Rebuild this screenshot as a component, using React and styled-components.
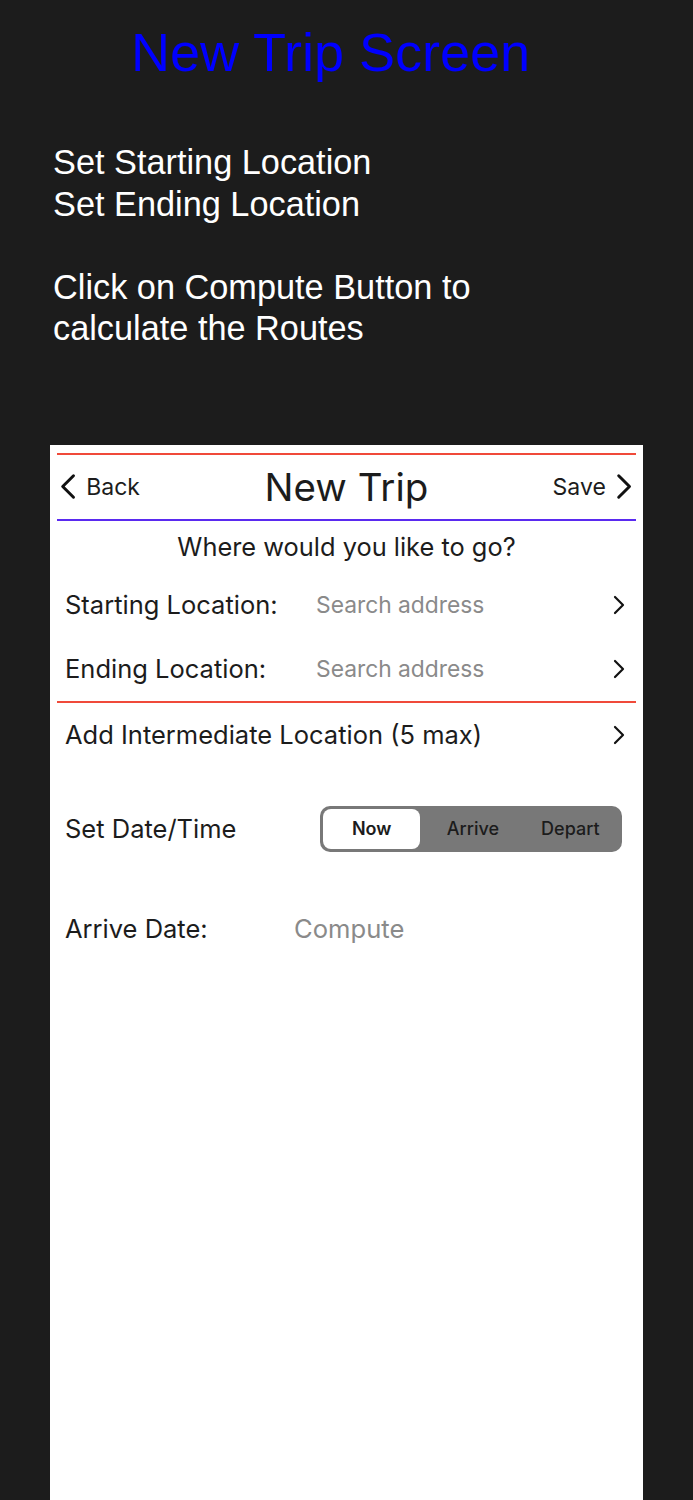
import React from 'react'
import styled, { createGlobalStyle } from 'styled-components'

const GlobalStyle = createGlobalStyle`
    body {
        margin: 0;
        background-color: #1c1c1c;
        font-family: "Liberation Sans", Arial, sans-serif;
    }
`;

const Page = styled.div`
    width: 693px;
    min-height: 1500px;
    background-color: #1c1c1c;
    padding-top: 22px;
    box-sizing: border-box;
`;

const Title = styled.h1`
    margin: 0 0 0 131px;
    font-family: "Liberation Sans", Arial, sans-serif;
    font-weight: 400;
    font-size: 54px;
    line-height: 60px;
    color: #0000ff;
`;

const Notes = styled.div`
    margin: 60px 0 0 53px;
    font-size: 34.3px;
    line-height: 41.5px;
    color: #ffffff;
`;

const Card = styled.div`
    width: 593px;
    height: 1056px;
    margin: 95px 0 0 50px;
    padding: 8px 7px 0 7px;
    box-sizing: border-box;
    background-color: #ffffff;
    font-family: Inter, "Noto Sans", sans-serif;
    color: #1c1c1c;
`;

const Rule = styled.div`
    height: 2px;
    background-color: ${props => props.$color};
`;

const Header = styled.div`
    height: 64px;
    display: grid;
    grid-template-columns: 1fr auto 1fr;
    align-items: center;

    h2 {
        margin: 0;
        font-size: 38.5px;
        font-weight: 400;
    }
`;

const NavButton = styled.div`
    display: flex;
    align-items: center;
    gap: 10px;
    font-size: 23px;
    justify-content: ${props => props.$right ? 'flex-end' : 'flex-start'};
    padding: ${props => props.$right ? '0 4px 0 0' : '0 0 0 3px'};
`;

const Question = styled.div`
    height: 52px;
    display: flex;
    align-items: center;
    justify-content: center;
    font-size: 25.4px;
`;

const Row = styled.div`
    height: 64px;
    display: flex;
    align-items: center;
    padding: 0 11px 0 8px;
    font-size: 25.5px;
`;

const Label = styled.span`
    width: ${props => props.$width || 'auto'};
    flex-shrink: 0;
`;

const Value = styled.span`
    flex: 1;
    color: #8a8a8a;
    font-size: ${props => props.$size || '22.8px'};
`;

const OptionRow = styled.div`
    height: 46px;
    display: flex;
    align-items: center;
    padding: 0 14px 0 8px;
    margin-top: ${props => props.$gap};
    font-size: 25.5px;
`;

const Segmented = styled.div`
    margin-left: auto;
    width: 302px;
    height: 46px;
    box-sizing: border-box;
    padding: 3px;
    display: flex;
    border-radius: 10px;
    background-color: #787878;
`;

const Segment = styled.div`
    flex: 1;
    display: flex;
    align-items: center;
    justify-content: center;
    border-radius: 8px;
    font-size: 18px;
    font-weight: ${props => props.$active ? 600 : 500};
    background-color: ${props => props.$active ? '#ffffff' : 'transparent'};
    margin-right: ${props => props.$active ? '4px' : '0'};
    color: #1c1c1c;
`;

const Chevron = ({ left, size = 20 }) => (
    <svg width={size * 0.6} height={size} viewBox="0 0 12 20" fill="none">
        <polyline
            points={left ? '10,2 2,10 10,18' : '2,2 10,10 2,18'}
            stroke="#111"
            strokeWidth="2.2"
            strokeLinecap="round"
            strokeLinejoin="round"
        />
    </svg>
);

const App = () => {
    return (
        <Page>
            <GlobalStyle />
            <Title>New Trip Screen</Title>
            <Notes>
                Set Starting Location<br />
                Set Ending Location<br />
                <br />
                Click on Compute Button to<br />
                calculate the Routes
            </Notes>
            <Card>
                <Rule $color='#f04a3a' />
                <Header>
                    <NavButton>
                        <Chevron left size={27} />
                        <span>Back</span>
                    </NavButton>
                    <h2>New Trip</h2>
                    <NavButton $right>
                        <span>Save</span>
                        <Chevron size={27} />
                    </NavButton>
                </Header>
                <Rule $color='#5a2af0' />
                <Question>Where would you like to go?</Question>
                <Row>
                    <Label $width='251px'>Starting Location:</Label>
                    <Value>Search address</Value>
                    <Chevron />
                </Row>
                <Row>
                    <Label $width='251px'>Ending Location:</Label>
                    <Value>Search address</Value>
                    <Chevron />
                </Row>
                <Rule $color='#f04a3a' />
                <Row>
                    <Label>Add Intermediate Location (5 max)</Label>
                    <Value />
                    <Chevron />
                </Row>
                <OptionRow $gap='39px'>
                    <Label>Set Date/Time</Label>
                    <Segmented>
                        <Segment $active>Now</Segment>
                        <Segment>Arrive</Segment>
                        <Segment>Depart</Segment>
                    </Segmented>
                </OptionRow>
                <OptionRow $gap='54px'>
                    <Label $width='229px'>Arrive Date:</Label>
                    <Value $size='25.6px'>Compute</Value>
                </OptionRow>
            </Card>
        </Page>
    )
}

export default App
